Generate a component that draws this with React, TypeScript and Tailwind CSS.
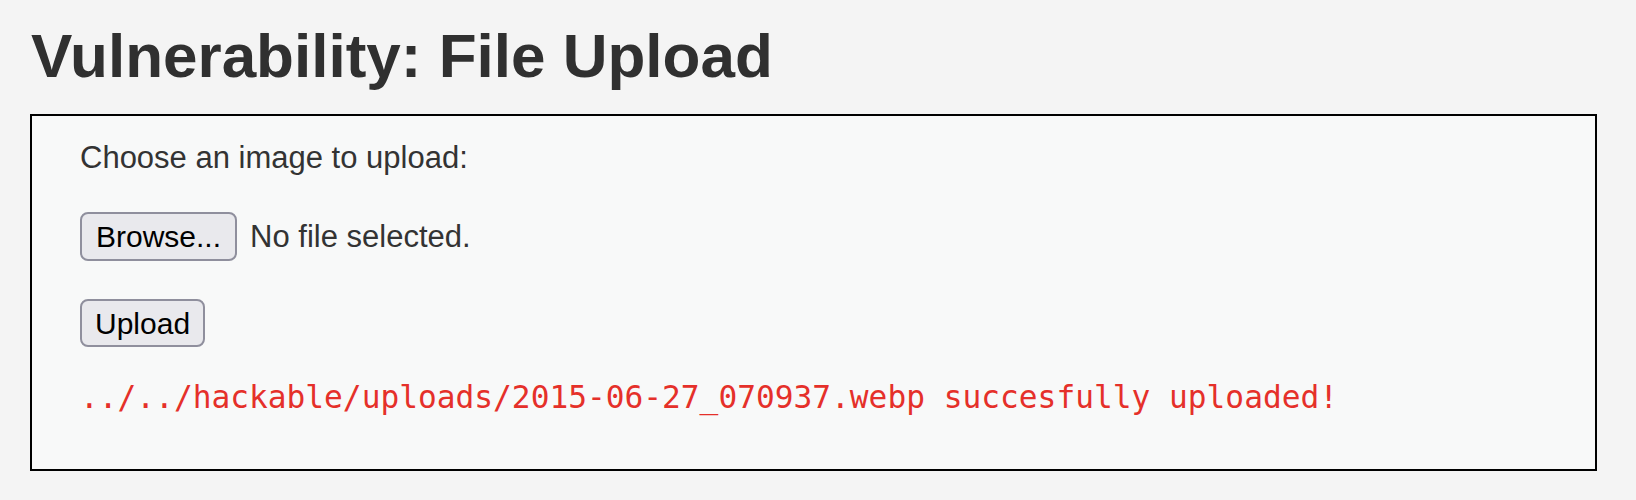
export default function App() {
  return (
    <div className="min-h-screen bg-[#f4f4f4] pl-[30px] pt-[25px] font-['Liberation_Sans',Arial,sans-serif] text-[#333]">
      {/* Heading */}
      <h1 className="ml-px text-[62px] font-bold leading-[62px] text-[#303030]">
        Vulnerability: File Upload
      </h1>

      {/* Vulnerable code area */}
      <div className="mt-[27px] flex h-[357px] w-[1567px] flex-col border-2 border-black bg-[#f8f9f9] pl-[48px] pt-[24px]">
        <p className="text-[31px] leading-[36px]">Choose an image to upload:</p>

        <div className="mt-[36px] flex items-center gap-[13px]">
          <button className="h-[49px] rounded-[8px] border-2 border-[#8f8f9d] bg-[#e9e9ed] px-[14px] text-[30px] leading-[33px] text-black">
            Browse...
          </button>
          <span className="text-[31px] leading-[36px]">No file selected.</span>
        </div>

        <div className="mt-[38px] flex">
          <button className="h-[48px] rounded-[8px] border-2 border-[#8f8f9d] bg-[#e9e9ed] px-[13px] text-[30px] leading-[33px] text-black">
            Upload
          </button>
        </div>

        <pre className="mt-[32px] font-['DejaVu_Sans_Mono',monospace] text-[31.2px] leading-[36px] text-[#e5302a]">
          ../../hackable/uploads/2015-06-27_070937.webp succesfully uploaded!
        </pre>
      </div>
    </div>
  );
}
